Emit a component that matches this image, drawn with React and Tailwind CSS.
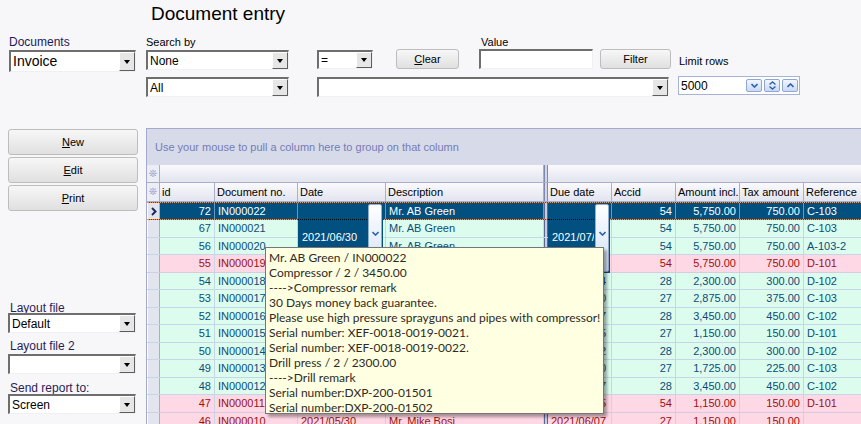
import React from 'react';

const ROWS = [
  { id: 72, doc: 'IN000022', date: '2021/06/30', desc: 'Mr. AB Green', due: '2021/07/30', acc: 54, amt: '5,750.00', tax: '750.00', ref: 'C-103', kind: 'sel' },
  { id: 67, doc: 'IN000021', date: '2021/06/28', desc: 'Mr. AB Green', due: '2021/07/28', acc: 54, amt: '5,750.00', tax: '750.00', ref: 'C-103', kind: 'g' },
  { id: 56, doc: 'IN000020', date: '2021/06/26', desc: 'Mr. AB Green', due: '2021/07/26', acc: 54, amt: '5,750.00', tax: '750.00', ref: 'A-103-2', kind: 'g' },
  { id: 55, doc: 'IN000019', date: '2021/06/25', desc: 'Mr. AB Green', due: '2021/07/25', acc: 54, amt: '5,750.00', tax: '750.00', ref: 'D-101', kind: 'p' },
  { id: 54, doc: 'IN000018', date: '2021/06/24', desc: 'Mr. Tom Brown', due: '2021/06/24', acc: 28, amt: '2,300.00', tax: '300.00', ref: 'D-102', kind: 'g' },
  { id: 53, doc: 'IN000017', date: '2021/06/20', desc: 'Mr. Jim White', due: '2021/06/20', acc: 27, amt: '2,875.00', tax: '375.00', ref: 'C-103', kind: 'g' },
  { id: 52, doc: 'IN000016', date: '2021/06/17', desc: 'Mr. Tom Brown', due: '2021/06/17', acc: 28, amt: '3,450.00', tax: '450.00', ref: 'C-102', kind: 'g' },
  { id: 51, doc: 'IN000015', date: '2021/06/15', desc: 'Mr. Jim White', due: '2021/06/15', acc: 27, amt: '1,150.00', tax: '150.00', ref: 'D-101', kind: 'g' },
  { id: 50, doc: 'IN000014', date: '2021/06/12', desc: 'Mr. Tom Brown', due: '2021/06/12', acc: 28, amt: '2,300.00', tax: '300.00', ref: 'D-102', kind: 'g' },
  { id: 49, doc: 'IN000013', date: '2021/06/10', desc: 'Mr. Jim White', due: '2021/06/10', acc: 27, amt: '1,725.00', tax: '225.00', ref: 'C-103', kind: 'g' },
  { id: 48, doc: 'IN000012', date: '2021/06/07', desc: 'Mr. Tom Brown', due: '2021/06/07', acc: 28, amt: '3,450.00', tax: '450.00', ref: 'C-102', kind: 'g' },
  { id: 47, doc: 'IN000011', date: '2021/06/05', desc: 'Mr. AB Green', due: '2021/06/05', acc: 54, amt: '1,150.00', tax: '150.00', ref: 'D-101', kind: 'p' },
  { id: 46, doc: 'IN000010', date: '2021/05/30', desc: 'Mr. Mike Bosi', due: '2021/06/07', acc: 27, amt: '1,150.00', tax: '150.00', ref: '', kind: 'p' },
];

// column widths in px, divider sits between the two bands
const COLS = [
  { key: 'id', label: 'id', w: 'w-[55px]', right: true },
  { key: 'doc', label: 'Document no.', w: 'w-[83px]' },
  { key: 'date', label: 'Date', w: 'w-[88px]' },
  { key: 'desc', label: 'Description', w: 'w-[158px]' },
  { key: '|' },
  { key: 'due', label: 'Due date', w: 'w-[64px]' },
  { key: 'acc', label: 'Accid', w: 'w-[64px]', right: true },
  { key: 'amt', label: 'Amount incl.', w: 'w-[64px]', right: true },
  { key: 'tax', label: 'Tax amount', w: 'w-[64px]', right: true },
  { key: 'ref', label: 'Reference', w: 'w-[70px]' },
];

const TIP = [
  'Mr. AB Green / IN000022',
  'Compressor / 2 / 3450.00',
  '---->Compressor remark',
  '30 Days money back guarantee.',
  'Please use high pressure sprayguns and pipes with compressor!',
  'Serial number: XEF-0018-0019-0021.',
  'Serial number: XEF-0018-0019-0022.',
  'Drill press / 2 / 2300.00',
  '---->Drill remark',
  'Serial number:DXP-200-01501',
  'Serial number:DXP-200-01502',
];

const Triangle = () => (
  <span className="w-0 h-0 border-l-[3.5px] border-r-[3.5px] border-t-[4px] border-l-transparent border-r-transparent border-t-black" />
);

const Combo = ({ cls, text, textCls = 'text-[12px]' }) => (
  <div className={`flex bg-white border-t-2 border-l-2 border-b border-r border-t-[#6e6e6e] border-l-[#6e6e6e] border-b-[#f0f0f0] border-r-[#f0f0f0] ${cls}`}>
    <div className={`flex-1 flex items-center pl-[2px] text-black overflow-hidden whitespace-nowrap ${textCls}`}>{text}</div>
    <div className="w-[16px] flex items-center justify-center bg-[#e6e6e6] border border-t-white border-l-white border-r-[#5e5e5e] border-b-[#5e5e5e]">
      <Triangle />
    </div>
  </div>
);

const Btn = ({ cls, children }) => (
  <div className={`flex items-center justify-center rounded-[3px] border border-[#bdbdbd] bg-linear-to-b from-[#f7f7f7] to-[#e0e0e0] text-[11px] text-black ${cls}`}>
    {children}
  </div>
);

const Chev = ({ up, color = '#2f62ad' }) => (
  <svg width="7" height="5" viewBox="0 0 7 5">
    <path d={up ? 'M0.5 4 L3.5 1 L6.5 4' : 'M0.5 1 L3.5 4 L6.5 1'} stroke={color} strokeWidth="1.6" fill="none" />
  </svg>
);

const SpinBtn = ({ children }) => (
  <div className="w-[16px] h-[13px] flex flex-col items-center justify-center rounded-[2px] border border-[#8ea7d6] bg-linear-to-b from-[#f2f6fe] to-[#c9d9f4]">
    {children}
  </div>
);

const Star = () => <span className="text-[10px] leading-none text-[#7d9ad0] font-['DejaVu_Sans']">❊</span>;

const rowStyle = {
  sel: 'bg-[#01507f] text-white border-t border-b border-dotted border-[#ff9a3a]',
  g: 'bg-[#dcfced] text-[#0b4c7b] border-b border-[#c6d5e8]',
  p: 'bg-[#ffd8e6] text-[#9a1212] border-b border-[#d8cbe0]',
};

const DataRow = ({ r }) => (
  <div className={`flex h-[18px] ${rowStyle[r.kind]}`}>
    <div className="w-[13px] shrink-0 flex items-center justify-center bg-[#e3e5ee] border-r border-[#a9aec8] border-l border-l-white">
      {r.kind === 'sel' && (
        <svg width="6" height="9" viewBox="0 0 6 9">
          <path d="M1 1 L4.5 4.5 L1 8" stroke="#1c2b5c" strokeWidth="2" fill="none" />
        </svg>
      )}
    </div>
    {COLS.map((c) =>
      c.key === '|' ? (
        <div key="div" className="w-[4px] shrink-0 bg-[#c9cde2] border-l border-r border-[#5b6592]" />
      ) : (
        <div
          key={c.key}
          className={`${c.w} shrink-0 flex items-center overflow-hidden whitespace-nowrap border-r ${r.kind === 'sel' ? 'border-[#6f95b8]' : 'border-[#c6d5e8]'} ${c.right ? 'justify-end pr-[3px]' : 'pl-[3px]'}`}
        >
          {r[c.key]}
        </div>
      )
    )}
  </div>
);

const Editor = ({ cls, text, lineW }) => (
  <div className={`absolute top-[203px] h-[70px] bg-[#01507f] ${cls}`}>
    <div className={`absolute left-0 top-[16px] border-t border-dotted border-black ${lineW}`} />
    <div className={`absolute left-0 top-[26px] pl-[4px] text-[11px] leading-[17px] text-white overflow-hidden whitespace-nowrap ${lineW}`}>{text}</div>
    <div className="absolute right-[1px] top-[1px] bottom-[1px] w-[14px] rounded-[2px] border border-[#94aed0] bg-linear-to-b from-white to-[#cfe0f5] flex justify-center pt-[26px]">
      <Chev />
    </div>
  </div>
);

export default function App() {
  return (
    <div className="relative w-[861px] h-[424px] overflow-hidden bg-[#f7f7fa] font-['Liberation_Sans',Arial,sans-serif]">
      {/* filter header */}
      <div className="h-[128px] flex flex-col">
        <div className="h-[30px] pl-[151px] pt-[3px] text-[19px] leading-[22px] text-black">Document entry</div>
        <div className="flex">
          <div className="ml-[9px] w-[127px] mt-[5px]">
            <div className="h-[15px] text-[12px] leading-[14px] text-[#1d1b5c]">Documents</div>
            <Combo cls="w-[127px] h-[22px]" text="Invoice" textCls="text-[14px]" />
          </div>
          <div className="ml-[10px] w-[143px] mt-[5px]">
            <div className="h-[15px] text-[11px] leading-[14px] text-black">Search by</div>
            <Combo cls="w-[143px] h-[20px]" text="None" />
            <Combo cls="w-[143px] h-[20px] mt-[7px]" text="All" />
          </div>
          <div className="ml-[28px] w-[354px] mt-[5px]">
            <div className="flex items-start">
              <Combo cls="w-[56px] h-[19px] mt-[15px]" text="=" />
              <Btn cls="ml-[23px] mt-[14px] w-[63px] h-[20px]">
                <span><span className="underline">C</span>lear</span>
              </Btn>
              <div className="ml-[20px] w-[114px]">
                <div className="h-[14px] text-[11px] leading-[14px] text-black pl-[2px]">Value</div>
                <div className="h-[20px] bg-white border-t-2 border-l-2 border-b border-r border-t-[#6e6e6e] border-l-[#6e6e6e] border-b-[#f0f0f0] border-r-[#f0f0f0]" />
              </div>
              <Btn cls="ml-[7px] mt-[14px] w-[71px] h-[20px]">Filter</Btn>
            </div>
            <Combo cls="w-[352px] h-[20px] mt-[8px]" text="" />
          </div>
          <div className="ml-[7px] mt-[24px]">
            <div className="h-[14px] text-[11px] leading-[14px] text-black pl-[1px]">Limit rows</div>
            <div className="mt-[8px] w-[122px] h-[19px] flex items-center bg-white border border-[#a7b3d6] pl-[2px] pr-[1px]">
              <span className="flex-1 text-[12px] text-black">5000</span>
              <div className="flex gap-[2px]">
                <SpinBtn><Chev /></SpinBtn>
                <SpinBtn>
                  <svg width="7" height="9" viewBox="0 0 7 9">
                    <path d="M0.5 3.5 L3.5 1 L6.5 3.5 M0.5 5.5 L3.5 8 L6.5 5.5" stroke="#2f62ad" strokeWidth="1.4" fill="none" />
                  </svg>
                </SpinBtn>
                <SpinBtn><Chev up /></SpinBtn>
              </div>
            </div>
          </div>
        </div>
      </div>

      {/* body */}
      <div className="flex h-[296px]">
        <div className="w-[146px] shrink-0 flex flex-col">
          <Btn cls="ml-[8px] mt-[1px] w-[130px] h-[26px]"><span><span className="underline">N</span>ew</span></Btn>
          <Btn cls="ml-[8px] mt-[2px] w-[130px] h-[26px]"><span><span className="underline">E</span>dit</span></Btn>
          <Btn cls="ml-[8px] mt-[2px] w-[130px] h-[26px]"><span><span className="underline">P</span>rint</span></Btn>

          <div className="ml-[10px] mt-[90px] h-[12px] text-[12px] leading-[14px] text-[#2a1d55]">Layout file</div>
          <Combo cls="ml-[8px] w-[128px] h-[20px]" text="Default" />
          <div className="ml-[10px] mt-[6px] h-[12px] text-[12px] leading-[14px] text-[#2a1d55]">Layout file 2</div>
          <Combo cls="ml-[8px] mt-[3px] w-[128px] h-[20px]" text="" />
          <div className="ml-[10px] mt-[7px] h-[12px] text-[12px] leading-[14px] text-[#2a1d55]">Send report to:</div>
          <Combo cls="ml-[8px] mt-[1px] w-[128px] h-[20px]" text="Screen" />
        </div>

        <div className="flex-1 flex flex-col border-l border-t border-[#a3aacb] text-[11px] overflow-hidden">
          <div className="h-[36px] shrink-0 flex items-center pl-[8px] bg-[#d7dae9] text-[11px] text-[#757cb6]">
            Use your mouse to pull a column here to group on that column
          </div>
          {/* band row */}
          <div className="flex h-[18px] shrink-0 border-b border-[#a9aecb]">
            <div className="w-[13px] shrink-0 flex items-center justify-center bg-[#eceef6] border-r border-[#a9aecb]"><Star /></div>
            <div className="w-[384px] shrink-0 bg-linear-to-b from-[#fafafd] to-[#e2e4ef] border-r border-[#a9aecb]" />
            <div className="w-[4px] shrink-0 bg-[#d2d5e6] border-l border-r border-[#7f88b2]" />
            <div className="flex-1 bg-linear-to-b from-[#fafafd] to-[#e2e4ef]" />
          </div>
          {/* header row */}
          <div className="flex h-[19px] shrink-0 border-b border-[#a9aecb]">
            <div className="w-[13px] shrink-0 flex items-center justify-center bg-[#eceef6] border-r border-[#a9aecb]"><Star /></div>
            {COLS.map((c) =>
              c.key === '|' ? (
                <div key="div" className="w-[4px] shrink-0 bg-[#d2d5e6] border-l border-r border-[#7f88b2]" />
              ) : (
                <div key={c.key} className={`${c.w} shrink-0 flex items-center pl-[2px] whitespace-nowrap overflow-hidden text-black bg-linear-to-b from-[#fafafd] to-[#e2e4ef] border-r border-[#a9aecb]`}>
                  {c.label}
                </div>
              )
            )}
          </div>
          {ROWS.map((r) => (
            <DataRow key={r.id} r={r} />
          ))}
        </div>
      </div>

      {/* in-place editors of the current row */}
      <Editor cls="left-[298px] w-[85px]" text="2021/06/30" lineW="w-[71px]" />
      <Editor cls="left-[548px] w-[62px]" text="2021/07/30" lineW="w-[46px]" />

      {/* hint popup */}
      <div className="absolute left-[265px] top-[247px] w-[339px] h-[167px] bg-[#ffffe1] border border-[#767676] shadow-[3px_3px_3px_rgba(0,0,0,0.35)] pl-[3px] pt-[2px] font-['Lato',sans-serif] text-[12px] leading-[15px] text-[#2e2a24] whitespace-nowrap">
        {TIP.map((t, i) => (
          <div key={i}>{t}</div>
        ))}
      </div>
    </div>
  );
}
